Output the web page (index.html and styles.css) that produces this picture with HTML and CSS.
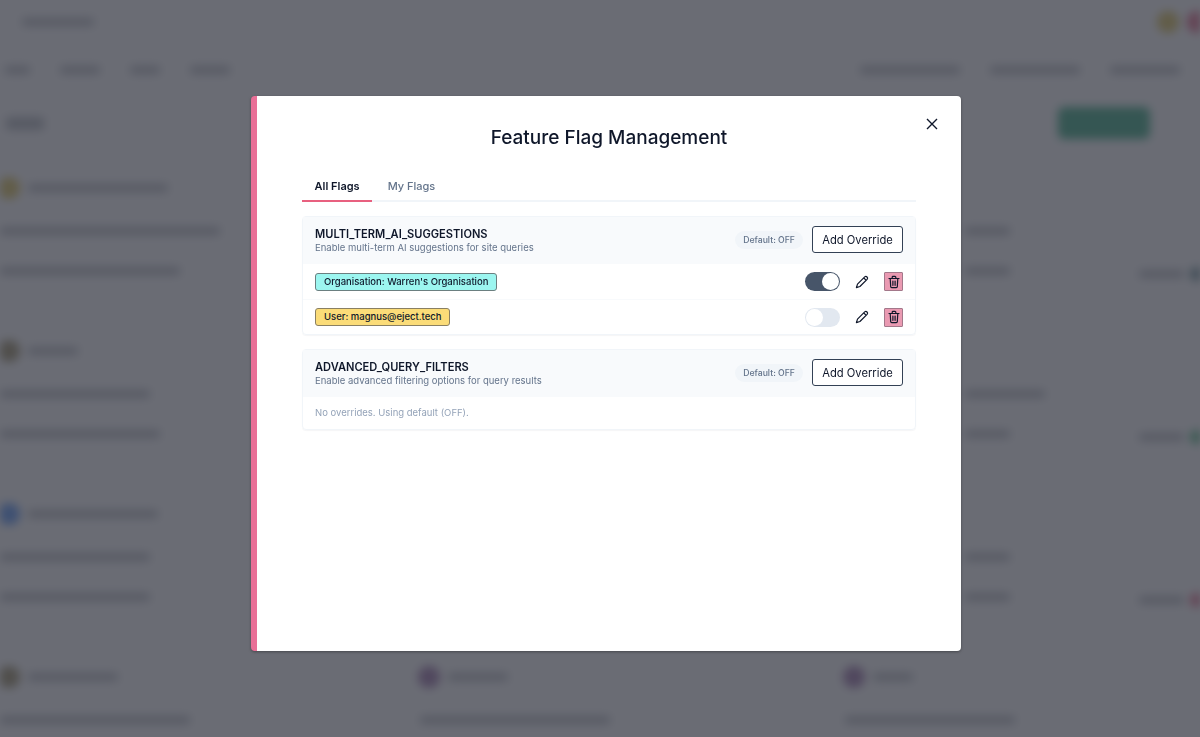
FILE: index.html
```html
<!DOCTYPE html>
<html>
<head>
    <title>Feature Flag Management</title>
    <link rel="stylesheet" href="styles.css">
</head>
<body>
<div class="page" aria-hidden="true">
    <div class="top">
        <i class="bar logo"></i>
        <div class="avatars"><i class="dot yellow"></i><i class="dot red"></i></div>
    </div>
    <div class="nav">
        <i class="bar w25"></i><i class="bar w40"></i><i class="bar w30"></i><i class="bar w40"></i>
        <div class="nav-right"><i class="bar w100"></i><i class="bar w90"></i><i class="bar w70"></i></div>
    </div>
    <div class="title-row">
        <i class="bar page-title"></i>
        <i class="green-btn"></i>
    </div>
    <div class="grid">
        <div class="site"><div class="site-head"><i class="dot yellow"></i><i class="bar w140"></i></div><i class="bar w220"></i><i class="bar w180"></i></div>
        <div class="site"></div>
        <div class="site"><div class="site-head"></div><i class="bar w45 push"></i><div class="split"><i class="bar w45"></i><div class="status"><i class="bar w45"></i><i class="dot small teal"></i></div></div></div>

        <div class="site"><div class="site-head"><i class="dot brown"></i><i class="bar w50"></i></div><i class="bar w150"></i><i class="bar w160"></i></div>
        <div class="site"></div>
        <div class="site"><div class="site-head"></div><i class="bar w80 push"></i><div class="split"><i class="bar w45"></i><div class="status"><i class="bar w45"></i><i class="dot small green"></i></div></div></div>

        <div class="site"><div class="site-head"><i class="dot blue"></i><i class="bar w130"></i></div><i class="bar w150"></i><i class="bar w150"></i></div>
        <div class="site"></div>
        <div class="site"><div class="site-head"></div><i class="bar w45 push"></i><div class="split"><i class="bar w45"></i><div class="status"><i class="bar w45"></i><i class="dot small red"></i></div></div></div>

        <div class="site"><div class="site-head"><i class="dot brown"></i><i class="bar w90"></i></div><i class="bar w190"></i></div>
        <div class="site"><div class="site-head"><i class="dot plum"></i><i class="bar w60"></i></div><i class="bar w190"></i></div>
        <div class="site"><div class="site-head"><i class="dot plum"></i><i class="bar w40"></i></div><i class="bar w170"></i></div>
    </div>
</div>

<div class="overlay">
    <div class="modal">
        <button class="close" title="Close">
            <svg width="14" height="14" viewBox="0 0 14 14"><path d="M2 2l10 10M12 2L2 12" stroke="currentColor" stroke-width="1.4" fill="none"/></svg>
        </button>
        <h2 class="modal-title">Feature Flag Management</h2>
        <div class="tabs">
            <button class="tab active">All Flags</button>
            <button class="tab">My Flags</button>
        </div>

        <section class="flag">
            <div class="flag-head">
                <div class="flag-info">
                    <div class="flag-name">MULTI_TERM_AI_SUGGESTIONS</div>
                    <div class="flag-desc">Enable multi-term AI suggestions for site queries</div>
                </div>
                <span class="default-pill">Default: OFF</span>
                <button class="add-btn">Add Override</button>
            </div>
            <div class="override">
                <span class="tag org">Organisation: Warren's Organisation</span>
                <div class="actions">
                    <span class="switch on"><i></i></span>
                    <button class="icon-btn" title="Edit">
                        <svg width="14" height="14" viewBox="0 0 14 14"><path d="M9.7 1.9a1.7 1.7 0 0 1 2.4 2.4L4.9 11.5 1.4 12.6l1.1-3.5zM8.8 3l2.2 2.2" stroke="currentColor" stroke-width="1.2" fill="none" stroke-linejoin="round"/></svg>
                    </button>
                    <button class="icon-btn delete" title="Delete">
                        <svg width="14" height="14" viewBox="0 0 14 14"><path d="M2 3.5h10M5.2 3.5V2.2a.8.8 0 0 1 .8-.8h2a.8.8 0 0 1 .8.8v1.3M3.2 3.5l.5 8.2a1 1 0 0 0 1 .9h4.6a1 1 0 0 0 1-.9l.5-8.2M5.9 6v4.3M8.1 6v4.3" stroke="currentColor" stroke-width="1.2" fill="none" stroke-linecap="round"/></svg>
                    </button>
                </div>
            </div>
            <div class="override">
                <span class="tag user">User: magnus@eject.tech</span>
                <div class="actions">
                    <span class="switch"><i></i></span>
                    <button class="icon-btn" title="Edit">
                        <svg width="14" height="14" viewBox="0 0 14 14"><path d="M9.7 1.9a1.7 1.7 0 0 1 2.4 2.4L4.9 11.5 1.4 12.6l1.1-3.5zM8.8 3l2.2 2.2" stroke="currentColor" stroke-width="1.2" fill="none" stroke-linejoin="round"/></svg>
                    </button>
                    <button class="icon-btn delete" title="Delete">
                        <svg width="14" height="14" viewBox="0 0 14 14"><path d="M2 3.5h10M5.2 3.5V2.2a.8.8 0 0 1 .8-.8h2a.8.8 0 0 1 .8.8v1.3M3.2 3.5l.5 8.2a1 1 0 0 0 1 .9h4.6a1 1 0 0 0 1-.9l.5-8.2M5.9 6v4.3M8.1 6v4.3" stroke="currentColor" stroke-width="1.2" fill="none" stroke-linecap="round"/></svg>
                    </button>
                </div>
            </div>
        </section>

        <section class="flag">
            <div class="flag-head">
                <div class="flag-info">
                    <div class="flag-name">ADVANCED_QUERY_FILTERS</div>
                    <div class="flag-desc">Enable advanced filtering options for query results</div>
                </div>
                <span class="default-pill">Default: OFF</span>
                <button class="add-btn">Add Override</button>
            </div>
            <div class="no-overrides">No overrides. Using default (OFF).</div>
        </section>
    </div>
</div>
</body>
</html>
```

FILE: styles.css
```css
html, body {
    margin: 0;
    height: 100%;
    overflow: hidden;
    background: #fff;
    font-family: Inter, "Liberation Sans", sans-serif;
}
button {
    font-family: inherit;
    cursor: pointer;
}

/* page behind the modal, only ever seen blurred */
.page {
    height: 737px;
    filter: blur(5px);
    overflow: hidden;
}
.page i {
    display: block;
}
.bar {
    height: 8px;
    border-radius: 3px;
    background: #a9adb5;
}
.dot {
    flex: none;
    width: 22px;
    height: 22px;
    border-radius: 50%;
    background: #64748b;
}
.dot.small {
    width: 14px;
    height: 14px;
}
.yellow { background: #d9b93a; }
.red { background: #e0406a; }
.teal { background: #3f6f78; }
.green { background: #22a860; }
.brown { background: #8a7a4a; }
.blue { background: #3b82f6; }
.plum { background: #8b5a9b; }
.w25 { width: 25px; }
.w30 { width: 30px; }
.w40 { width: 40px; }
.w45 { width: 45px; }
.w50 { width: 50px; }
.w60 { width: 60px; }
.w70 { width: 70px; }
.w80 { width: 80px; }
.w90 { width: 90px; }
.w100 { width: 100px; }
.w130 { width: 130px; }
.w140 { width: 140px; }
.w150 { width: 150px; }
.w160 { width: 160px; }
.w170 { width: 170px; }
.w180 { width: 180px; }
.w190 { width: 190px; }
.w220 { width: 220px; }
.top {
    display: flex;
    justify-content: space-between;
    align-items: center;
    height: 44px;
    padding-left: 22px;
    margin-right: -9px;
}
.logo {
    width: 72px;
}
.avatars {
    display: flex;
    gap: 8px;
}
.nav {
    display: flex;
    align-items: center;
    gap: 30px;
    height: 52px;
    padding: 0 20px 0 5px;
}
.nav-right {
    display: flex;
    gap: 30px;
    margin-left: auto;
}
.title-row {
    display: flex;
    justify-content: space-between;
    align-items: center;
    height: 54px;
    padding: 0 50px 0 6px;
}
.page-title {
    width: 38px;
    height: 13px;
}
.green-btn {
    width: 92px;
    height: 32px;
    border-radius: 6px;
    background: #109a68;
}
.grid {
    display: grid;
    grid-template-columns: 420px 425px 1fr;
    grid-auto-rows: 163px;
    margin-top: 27px;
}
.site {
    display: flex;
    flex-direction: column;
    gap: 32px;
}
.site-head {
    display: flex;
    align-items: center;
    gap: 8px;
    height: 22px;
    margin-bottom: -4px;
    margin-left: -2px;
}
.push {
    margin-left: 120px;
}
.split {
    display: flex;
    justify-content: space-between;
    padding-left: 120px;
}
.status {
    display: flex;
    align-items: center;
    gap: 6px;
    margin-right: -4px;
}

/* modal */
.overlay {
    position: fixed;
    inset: 0;
    box-sizing: border-box;
    display: flex;
    align-items: flex-start;
    justify-content: center;
    padding: 96px 0 0 12px;
    background: rgba(64, 67, 77, 0.78);
}
.modal {
    position: relative;
    box-sizing: border-box;
    width: 710px;
    height: 555px;
    padding: 28px 45px 0 45px;
    background: #fff;
    border-left: 6px solid #e96f97;
    border-radius: 4px;
    box-shadow: 0 1px 3px rgba(0, 0, 0, .35);
}
.close {
    position: absolute;
    top: 21px;
    right: 22px;
    display: flex;
    padding: 0;
    border: 0;
    background: none;
    color: #0f172a;
}
.modal-title {
    margin: 0;
    font-size: 19px;
    line-height: 28px;
    font-weight: 500;
    color: #0f172a;
    text-align: center;
}
.tabs {
    display: flex;
    gap: 3px;
    margin-top: 18px;
    margin-bottom: 14px;
    border-bottom: 2px solid #f1f5f9;
}
.tab {
    height: 32px;
    margin-bottom: -2px;
    padding: 2px 12.5px 0;
    border: 0;
    border-bottom: 2px solid transparent;
    background: none;
    font-size: 11px;
    font-weight: 500;
    color: #64748b;
}
.tab.active {
    color: #0f172a;
    font-weight: 600;
    border-bottom-color: #e8607f;
}

.flag {
    margin-bottom: 14px;
    border: 1px solid #f1f5f9;
    border-radius: 4px;
    box-shadow: 0 1px 1px rgba(15, 23, 42, .04);
}
.flag-head {
    display: flex;
    align-items: center;
    height: 47px;
    padding: 0 12px;
    background: #f8fafc;
}
.flag-info {
    flex: 1;
}
.flag-name {
    font-size: 11.1px;
    line-height: 14px;
    font-weight: 600;
    color: #0f172a;
}
.flag-desc {
    font-size: 9.5px;
    line-height: 14px;
    color: #64748b;
}
.default-pill {
    margin-top: -2px;
    margin-right: 9px;
    padding: 3px 8px;
    border-radius: 10px;
    background: #f1f5f9;
    font-size: 8.7px;
    line-height: 12px;
    font-weight: 500;
    color: #64748b;
}
.add-btn {
    width: 91px;
    height: 27px;
    margin-top: -2px;
    padding: 0;
    border: 1px solid #334155;
    border-radius: 3px;
    background: #fff;
    font-size: 11.2px;
    color: #0f172a;
}
.override {
    box-sizing: border-box;
    display: flex;
    align-items: center;
    justify-content: space-between;
    height: 35px;
    padding: 0 12px;
}
.override + .override {
    border-top: 1px solid #f8fafc;
}
.tag {
    padding: 1px 8px;
    border: 1px solid #6b7f80;
    border-radius: 3px;
    font-size: 9.5px;
    line-height: 14px;
    font-weight: 500;
    color: #0f172a;
}
.tag.org { background: #9cf6f0; }
.tag.user { background: #fbdc78; border-color: #8a8062; }
.actions {
    display: flex;
    align-items: center;
}
.switch {
    display: flex;
    box-sizing: border-box;
    width: 35px;
    height: 19px;
    padding: 1px;
    border-radius: 10px;
    background: #e2e8f0;
}
.switch i {
    width: 17px;
    height: 17px;
    border-radius: 50%;
    background: #fff;
}
.switch.on {
    justify-content: flex-end;
    background: #475569;
}
.icon-btn {
    display: flex;
    align-items: center;
    justify-content: center;
    box-sizing: border-box;
    width: 19px;
    height: 19px;
    margin-left: 12px;
    padding: 0;
    border: 0;
    border-radius: 1px;
    background: none;
    color: #0f172a;
}
.icon-btn.delete {
    margin-left: 13px;
    border: 1px solid #a3788a;
    background: #ea9ab2;
}
.no-overrides {
    height: 32px;
    padding: 0 12px;
    font-size: 9.5px;
    line-height: 31px;
    color: #94a3b8;
}
```
